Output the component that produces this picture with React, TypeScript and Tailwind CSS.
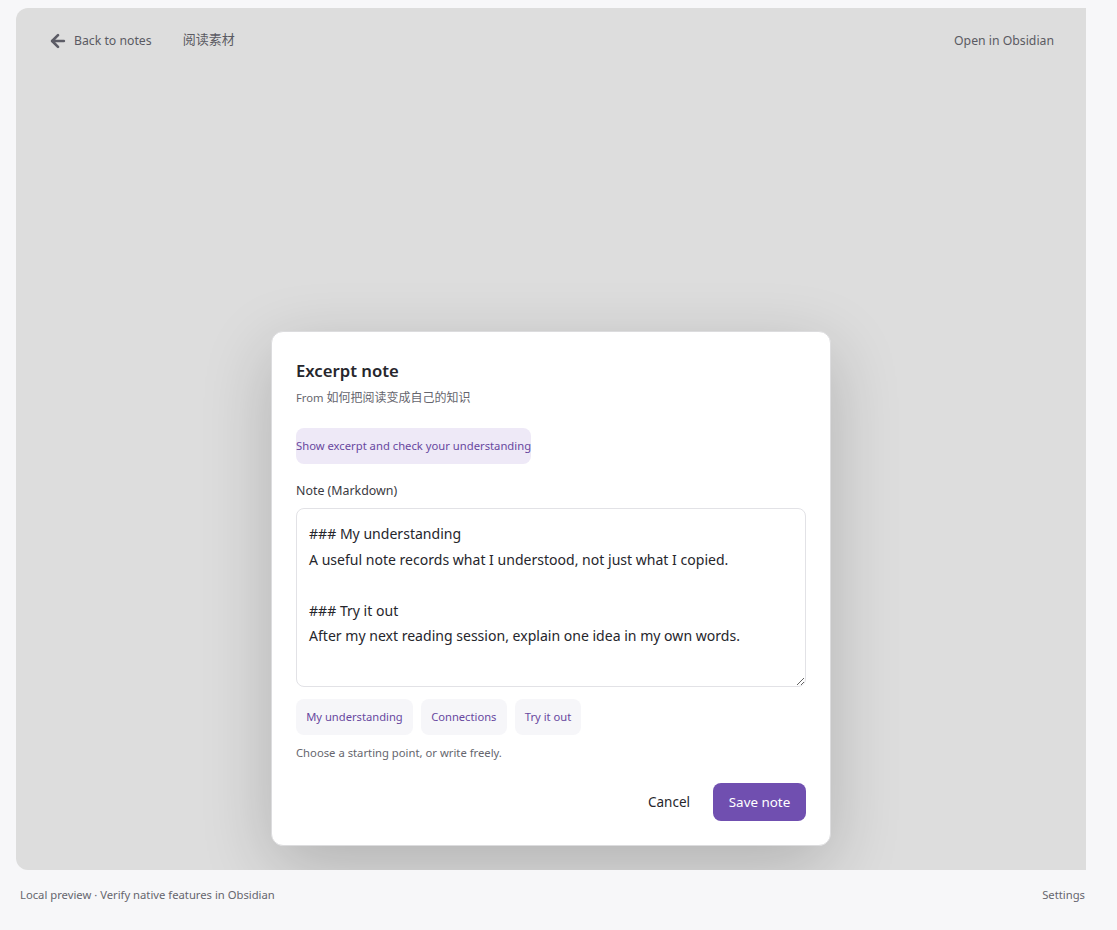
import { ArrowLeft } from 'lucide-react'

const font = "font-['Noto_Sans','Noto_Sans_CJK_SC',sans-serif]"

const noteText = `### My understanding
A useful note records what I understood, not just what I copied.

### Try it out
After my next reading session, explain one idea in my own words.`

function ExcerptDialog() {
  return (
    <div className="w-[560px] h-[515px] rounded-[12px] border border-[#dcdcde] bg-white p-6 shadow-[0_20px_70px_rgba(0,0,0,0.2)]">
      <h2 className="text-[16.7px] leading-[26px] mt-[2px] font-semibold text-[#26262c]">Excerpt note</h2>
      <p className="text-[11.25px] leading-[18px] mt-[5px] text-[#66666e]">
        From <span className="text-[12px]">如何把阅读变成自己的知识</span>
      </p>
      <button className="mt-[21px] block h-9 rounded-[8px] bg-[#eee9f7] text-[11.25px] text-[#68489f] whitespace-nowrap">
        Show excerpt and check your understanding
      </button>
      <label className="block mt-[18px] text-[12.4px] leading-[18px] text-[#3a3a42]">Note (Markdown)</label>
      <textarea
        className="mt-[8px] block w-full h-[179px] rounded-[8px] border border-[#e2e2e6] bg-white px-3 py-3 text-[14.06px] leading-[25.5px] text-[#26262c] outline-none"
        defaultValue={noteText}
      />
      <div className="mt-3 flex gap-2">
        {['My understanding', 'Connections', 'Try it out'].map((label) => (
          <button key={label} className="h-9 rounded-[8px] bg-[#f6f6f9] px-[10.2px] text-[11.2px] text-[#68489f] whitespace-nowrap">
            {label}
          </button>
        ))}
      </div>
      <p className="mt-[9px] text-[11.28px] leading-[18px] text-[#66666e]">Choose a starting point, or write freely.</p>
      <div className="mt-[21px] flex items-center justify-end gap-[23px]">
        <button className="text-[13.5px] text-[#26262c]">Cancel</button>
        <button className="h-[38px] w-[93px] rounded-[8px] bg-[#704fb0] text-[13.4px] text-white">Save note</button>
      </div>
    </div>
  )
}

export default function App() {
  return (
    <div className={`${font} h-[930px] bg-[#f7f7f9] pt-2 pl-4 pr-[31px] flex flex-col`}>
      <main className="relative h-[862px] overflow-hidden rounded-l-[12px] bg-[#dddddd]">
        <header className="flex items-center justify-between h-[66px] pl-[32px] pr-[32px] text-[12.25px] text-[#5a5a62]">
          <div className="flex items-center">
            <ArrowLeft size={20} strokeWidth={3.2} className="mr-[6px] -mt-[1px] text-[#5c5c66]" />
            <span>Back to notes</span>
            <span className="ml-[31px] -mt-[2px] text-[13px]">阅读素材</span>
          </div>
          <span>Open in Obsidian</span>
        </header>
        <div className="absolute inset-0 flex items-end justify-center pb-6">
          <ExcerptDialog />
        </div>
      </main>
      <footer className="flex justify-between items-center h-[50px] pl-1 pr-[1px] text-[11.25px] text-[#66666e]">
        <span>Local preview · Verify native features in Obsidian</span>
        <span>Settings</span>
      </footer>
    </div>
  )
}
